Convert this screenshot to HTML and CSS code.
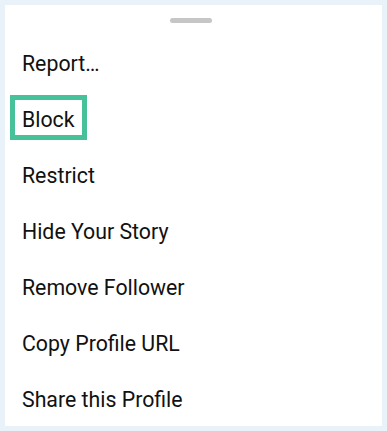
FILE: index.html
```html
<!DOCTYPE html>
<html lang="en">
<head>
  <meta charset="UTF-8">
  <meta name="viewport" content="width=device-width, initial-scale=1.0">
  <title>Profile Options</title>
  <link rel="stylesheet" href="styles.css">
</head>
<body>
  <div class="sheet">
    <div class="handle"></div>
    <ul class="menu">
      <li>Report…</li>
      <li><span class="highlight">Block</span></li>
      <li>Restrict</li>
      <li>Hide Your Story</li>
      <li>Remove Follower</li>
      <li>Copy Profile URL</li>
      <li>Share this Profile</li>
    </ul>
  </div>
</body>
</html>
```

FILE: styles.css
```css
html, body {
  height: 100%;
}
body {
  margin: 0;
  padding: 5px;
  box-sizing: border-box;
  background-color: #eaf2f9;
  font-family: Roboto, 'Noto Sans', sans-serif;
  color: #111;
}
.sheet {
  background-color: #fff;
  height: 421px;
  padding-top: 13px;
  box-sizing: border-box;
  overflow: hidden;
}
.handle {
  width: 42px;
  height: 5px;
  margin: 0 auto 0 165px;
  border-radius: 3px;
  background-color: #c6c6c6;
}
.menu {
  list-style-type: none;
  margin: 13px 0 0;
  padding: 0 0 0 17px;
}
.menu li {
  height: 56px;
  line-height: 56px;
  font-size: 21.3px;
}
.highlight {
  display: inline-block;
  line-height: 25px;
  padding: 7px 7px 3px;
  margin: 0 -12px;
  border: 5px solid #46c19a;
}
```
